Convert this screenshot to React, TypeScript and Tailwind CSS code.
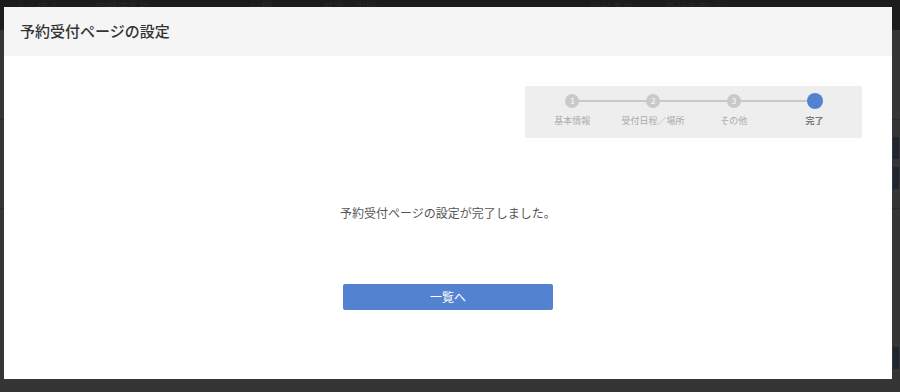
import React from "react";

const steps = [
  { no: "1", label: "基本情報" },
  { no: "2", label: "受付日程／場所" },
  { no: "3", label: "その他" },
  { no: "", label: "完了", current: true },
];

const bgCols = [
  { text: "よく使う", w: "w-[80px]" },
  { text: "管理用名称", w: "w-[155px]" },
  { text: "分類", w: "w-[72px]" },
  { text: "用途・説明", w: "w-[268px]" },
  { text: "受付条件", w: "w-[75px]" },
  { text: "受付画面URL", w: "w-[100px]" },
];

export default function App() {
  return (
    <div
      className="relative h-[392px] w-[900px] overflow-hidden bg-[#353535]"
      style={{ fontFamily: '"Noto Sans CJK JP", "Noto Sans", sans-serif' }}
    >
      {/* page behind the backdrop */}
      <div className="flex h-[30px] items-start bg-[#1c1c1c] pl-[15px] text-[11px] leading-[14px] text-[#282828]">
        {bgCols.map((c) => (
          <div key={c.text} className={c.w}>{c.text}</div>
        ))}
      </div>
      <div className="h-[90px] border-b border-[#2c2c2c]" />
      <div className="h-[89px] border-b border-[#2c2c2c]" />

      {/* modal */}
      <div className="absolute left-[4px] top-[7px] flex h-[372px] w-[888px] flex-col bg-white">
        <div className="flex h-[49px] items-center bg-[#f5f5f5] px-[16px]">
          <h1 className="text-[15px] font-medium text-[#333]">予約受付ページの設定</h1>
        </div>

        <div className="flex flex-1 flex-col">
          <div className="flex justify-end pr-[30px] pt-[30px]">
            <div className="grid h-[52px] w-[337px] grid-cols-4 bg-[#eeeeee] px-[7px] pt-[7px]">
              {steps.map((s, i) => (
                <div key={s.label} className="flex flex-col items-center">
                  <div className="relative flex h-[16px] w-full items-center justify-center">
                    {i < steps.length - 1 && (
                      <div className="absolute left-1/2 top-[7px] h-[2px] w-full bg-[#c9c9c9]" />
                    )}
                    {s.current ? (
                      <div className="relative h-[16px] w-[16px] rounded-full bg-[#5383d0]" />
                    ) : (
                      <div className="relative flex h-[14px] w-[14px] items-center justify-center rounded-full bg-[#c9c9c9] text-[8px] leading-none text-white">
                        {s.no}
                      </div>
                    )}
                  </div>
                  <div
                    className={`mt-[5px] text-[9px] leading-[14px] ${
                      s.current ? "font-bold text-[#777]" : "text-[#aaa]"
                    }`}
                  >
                    {s.label}
                  </div>
                </div>
              ))}
            </div>
          </div>

          <p className="mt-[67px] text-center text-[12px] leading-[16px] text-[#555]">
            予約受付ページの設定が完了しました。
          </p>

          <div className="mt-[63px] flex justify-center">
            <button className="h-[26px] w-[210px] rounded-[2px] bg-[#5383d0] text-[12px] text-white">
              一覧へ
            </button>
          </div>
        </div>
      </div>

      {/* partially visible buttons at right edge */}
      <div className="absolute left-[893px] top-[137px] h-[22px] w-[6px] rounded-l-[2px] bg-[#1f2633]" />
      <div className="absolute left-[893px] top-[167px] h-[22px] w-[6px] rounded-l-[2px] bg-[#1f2633]" />
      <div className="absolute left-[893px] top-[347px] h-[22px] w-[6px] rounded-l-[2px] bg-[#1f2633]" />
    </div>
  );
}
